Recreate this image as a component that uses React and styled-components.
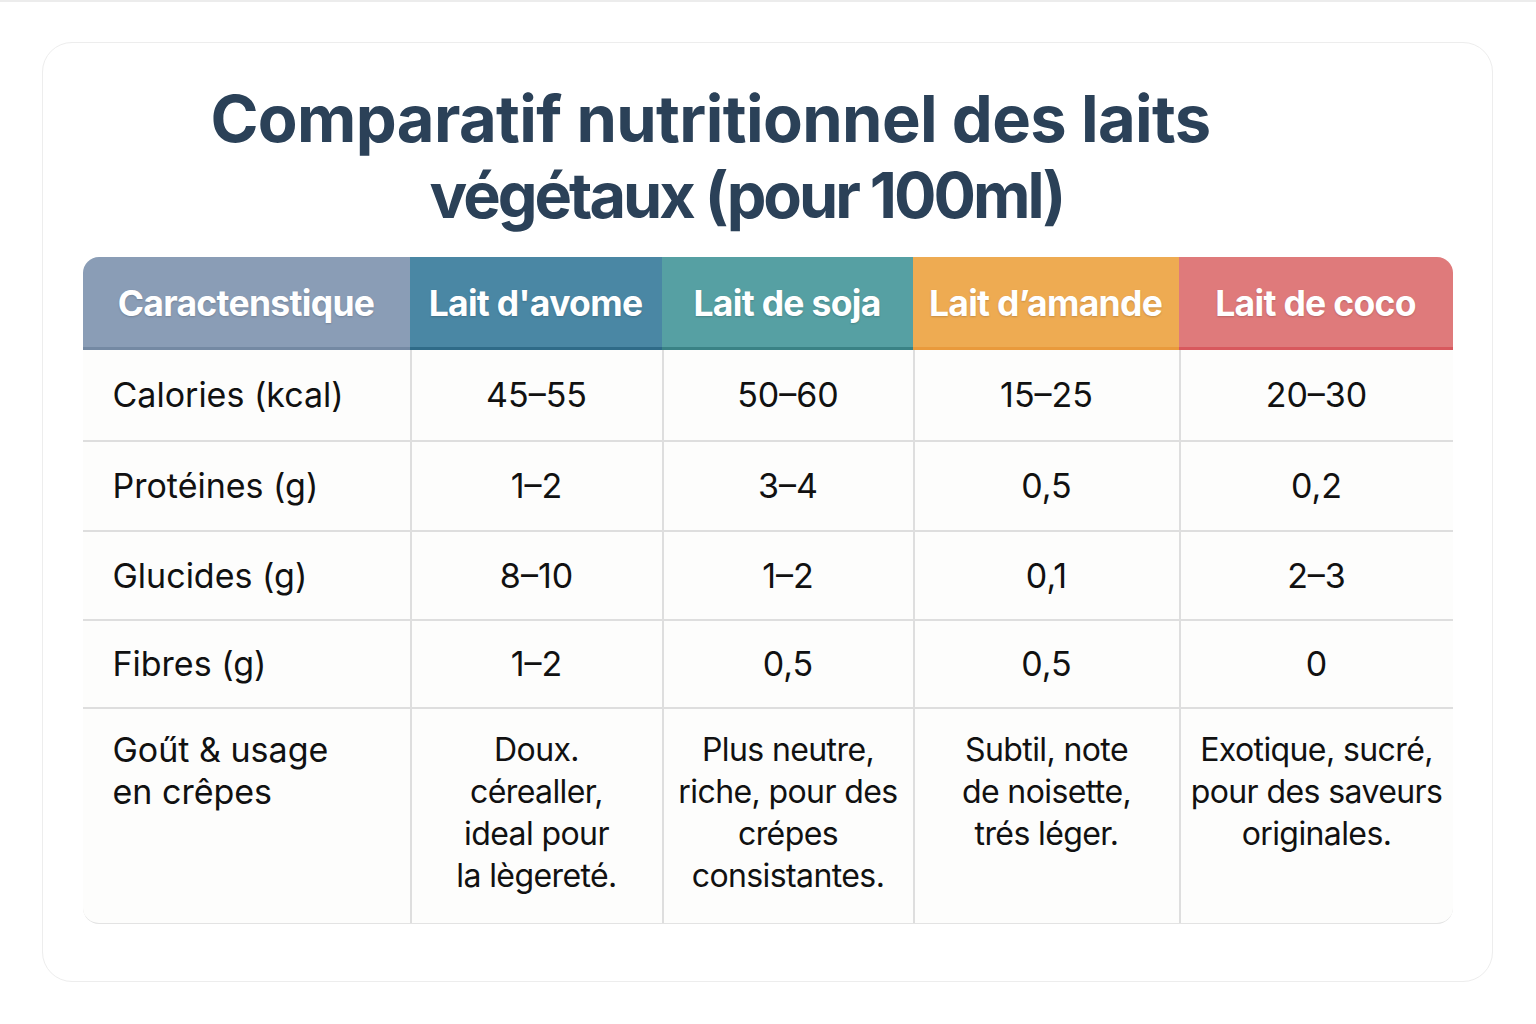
import React from "react";
import styled, { createGlobalStyle } from "styled-components";

const Global = createGlobalStyle`
  html, body { margin: 0; padding: 0; background: #ffffff; }
  body { font-family: Inter, "Noto Sans", sans-serif; }
`;

const Page = styled.div`
  width: 1536px;
  height: 1024px;
  box-sizing: border-box;
  padding: 40px 43px 0 42px;
  border-top: 2px solid #ececec;
  background: #fff;
`;

const Card = styled.div`
  box-sizing: border-box;
  height: 940px;
  border: 1.5px solid #ededed;
  border-radius: 30px;
  background: #fff;
  padding: 38px 40px 0 40px;
  display: flex;
  flex-direction: column;
  align-items: center;
`;

const Title = styled.h1`
  margin: 0 0 24px 0;
  width: 1370px;
  display: flex;
  flex-direction: column;
  align-items: center;
  font-family: Inter, sans-serif;
  font-weight: 700;
  font-size: 65px;
  line-height: 76px;
  color: #2b4158;
`;

const TitleLine = styled.span`
  white-space: nowrap;
  font-size: ${(p) => (p.$condensed ? "63px" : "65px")};
  letter-spacing: ${(p) => (p.$condensed ? "-3px" : "-0.6px")};
  margin-left: ${(p) => p.$shift || 0}px;
`;

const Table = styled.div`
  width: 1370px;
  display: grid;
  grid-template-columns: 327px 252px 251px 266px 274px;
  grid-template-rows: 93px 92px 90px 89px 88px 214px;
  border-radius: 16px;
  overflow: hidden;
  border-bottom: 1.5px solid #e3e3e3;
  background: #fdfdfc;
`;

const Head = styled.div`
  background: ${(p) => p.$bg};
  border-bottom: 3px solid ${(p) => p.$line};
  display: flex;
  align-items: center;
  justify-content: center;
  color: #fff;
  font-weight: 700;
  font-size: 35.5px;
  letter-spacing: -0.7px;
  white-space: nowrap;
  text-shadow: 0 1px 2px rgba(0, 0, 0, 0.18);
  box-sizing: border-box;
  padding-top: 2px;
`;

const Cell = styled.div`
  box-sizing: border-box;
  border-bottom: ${(p) => (p.$last ? "none" : "2px solid #dedede")};
  border-left: ${(p) => (p.$first ? "none" : "2px solid #dedede")};
  display: flex;
  flex-direction: column;
  justify-content: ${(p) => (p.$last ? "flex-start" : "center")};
  align-items: ${(p) => (p.$first ? "flex-start" : "center")};
  text-align: ${(p) => (p.$first ? "left" : "center")};
  padding: ${(p) => (p.$last ? "20px 2px 0" : "0 2px")};
  padding-left: ${(p) => (p.$first ? "30px" : "2px")};
  font-size: ${(p) => (p.$last && !p.$first ? "32px" : "34px")};
  letter-spacing: ${(p) => (p.$last && !p.$first ? "-0.6px" : "0")};
  line-height: 42px;
  color: #111;
`;

const Line = styled.span`
  white-space: nowrap;
`;

const headers = [
  { t: "Caractenstique", bg: "#8a9db6", line: "#7489a3" },
  { t: "Lait d'avome", bg: "#4a87a4", line: "#2f6b88" },
  { t: "Lait de soja", bg: "#56a0a3", line: "#3a8285" },
  { t: "Lait d’amande", bg: "#eeab52", line: "#e99a3c" },
  { t: "Lait de coco", bg: "#df7a7b", line: "#d8585d" },
];

const rows = [
  ["Calories (kcal)", "45–55", "50–60", "15–25", "20–30"],
  ["Protéines (g)", "1–2", "3–4", "0,5", "0,2"],
  ["Glucides (g)", "8–10", "1–2", "0,1", "2–3"],
  ["Fibres (g)", "1–2", "0,5", "0,5", "0"],
  [
    "Goűt & usage\nen crêpes",
    "Doux.\ncérealler,\nideal pour\nla lègereté.",
    "Plus neutre,\nriche, pour des\ncrépes\nconsistantes.",
    "Subtil, note\nde noisette,\ntrés léger.",
    "Exotique, sucré,\npour des saveurs\noriginales.",
  ],
];

export default function App() {
  return (
    <>
      <Global />
      <Page>
        <Card>
          <Title>
            <TitleLine $shift={-114}>Comparatif nutritionnel des laits</TitleLine>
            <TitleLine $condensed $shift={-42}>végétaux (pour 100ml)</TitleLine>
          </Title>
          <Table>
            {headers.map((h) => (
              <Head key={h.t} $bg={h.bg} $line={h.line}>
                {h.t}
              </Head>
            ))}
            {rows.map((r, ri) =>
              r.map((c, ci) => (
                <Cell key={ri + "-" + ci} $first={ci === 0} $last={ri === rows.length - 1}>
                  {c.split("\n").map((l, i) => (
                    <Line key={i}>{l}</Line>
                  ))}
                </Cell>
              ))
            )}
          </Table>
        </Card>
      </Page>
    </>
  );
}
